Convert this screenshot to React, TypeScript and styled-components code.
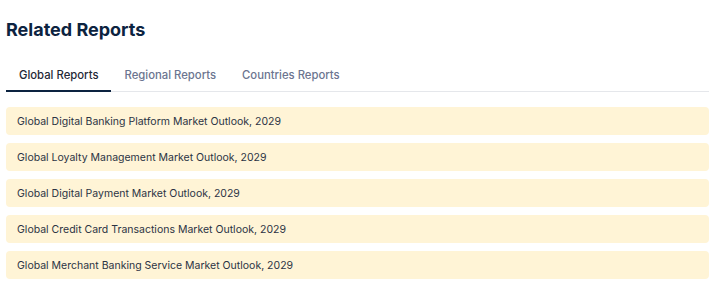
import React, { useState } from "react";
import styled, { createGlobalStyle } from "styled-components";

const GlobalStyle = createGlobalStyle`
  body {
    margin: 0;
    background: #fff;
    font-family: Inter, "Liberation Sans", sans-serif;
  }
`;

const Wrapper = styled.section`
  padding: 16px 6px 0 6px;
`;

const Title = styled.h2`
  margin: 0;
  font-size: 18px;
  line-height: 28px;
  font-weight: 700;
  color: #0c2340;
`;

const TabBar = styled.div`
  display: flex;
  margin-top: 16px;
  border-bottom: 1px solid #e5e7eb;
`;

const Tab = styled.button<{ $active?: boolean }>`
  border: 0;
  background: none;
  padding: 0 13px;
  height: 32px;
  font-family: inherit;
  font-size: 11.3px;
  font-weight: 500;
  color: ${(p) => (p.$active ? "#1f2937" : "#6b7590")};
  border-bottom: 2px solid ${(p) => (p.$active ? "#0c2340" : "transparent")};
  margin-bottom: -1px;
  cursor: pointer;
`;

const List = styled.ul`
  list-style: none;
  margin: 15px 0 0 0;
  padding: 0;
  display: flex;
  flex-direction: column;
  gap: 8px;
`;

const Item = styled.li`
  height: 28px;
  display: flex;
  align-items: center;
  padding: 0 11px;
  background: #fff4d6;
  border-radius: 4px;
  font-size: 10.5px;
  color: #2b3344;
`;

const tabs = ["Global Reports", "Regional Reports", "Countries Reports"];

const reports = [
  "Global Digital Banking Platform Market Outlook, 2029",
  "Global Loyalty Management Market Outlook, 2029",
  "Global Digital Payment Market Outlook, 2029",
  "Global Credit Card Transactions Market Outlook, 2029",
  "Global Merchant Banking Service Market Outlook, 2029",
];

const App: React.FC = () => {
  const [active, setActive] = useState(0);

  return (
    <Wrapper>
      <GlobalStyle />
      <Title>Related Reports</Title>
      <TabBar>
        {tabs.map((t, i) => (
          <Tab key={t} $active={i === active} onClick={() => setActive(i)}>
            {t}
          </Tab>
        ))}
      </TabBar>
      <List>
        {reports.map((r) => (
          <Item key={r}>{r}</Item>
        ))}
      </List>
    </Wrapper>
  );
};

export default App;
